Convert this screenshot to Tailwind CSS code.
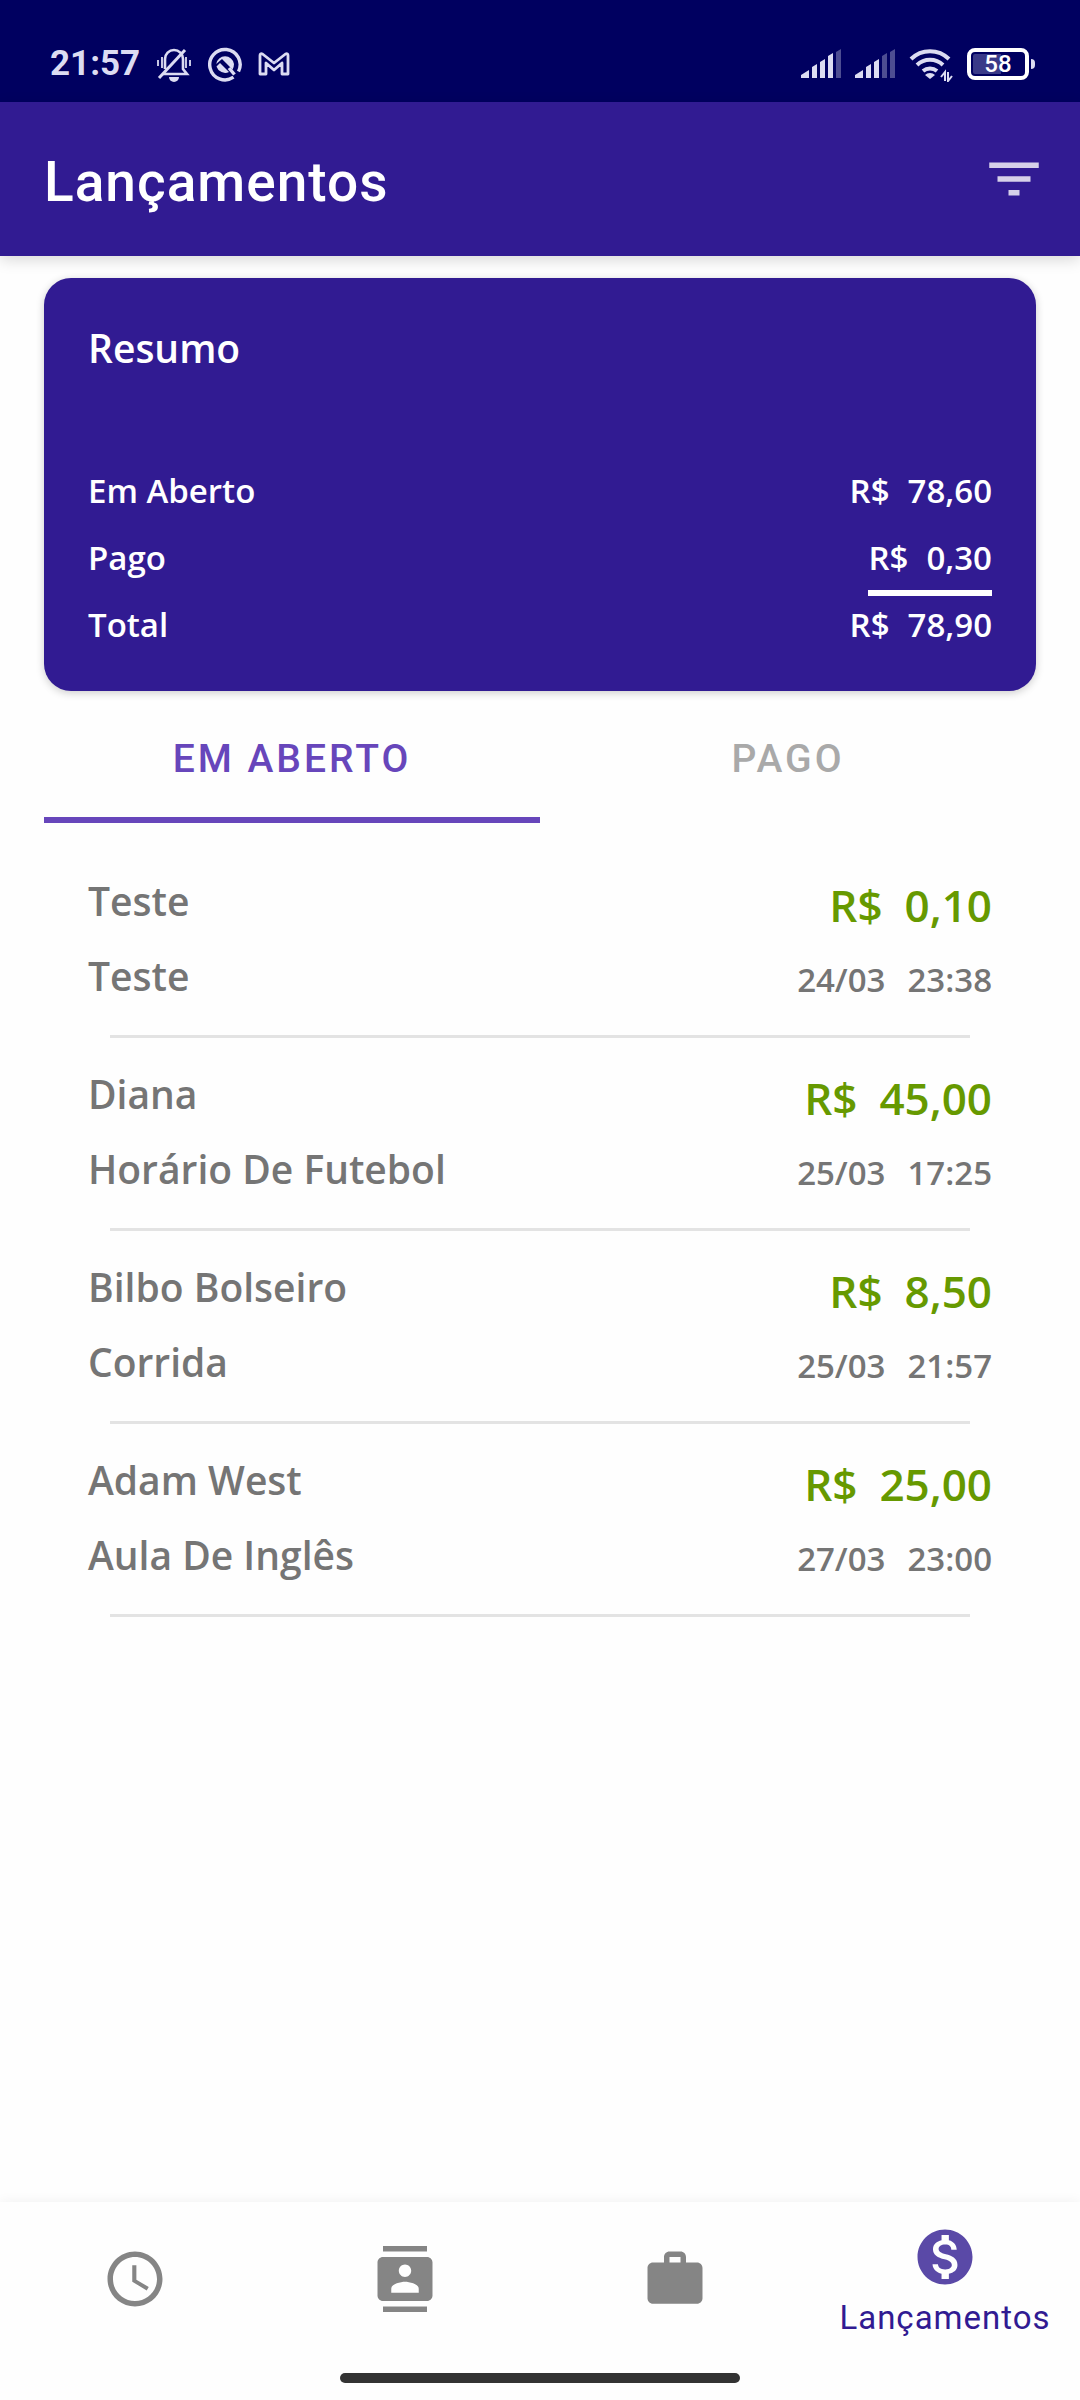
<!DOCTYPE html>
<html lang="pt-BR">
<head>
<meta charset="utf-8">
<meta name="viewport" content="width=device-width, initial-scale=1">
<title>Lançamentos</title>
<script src="https://cdn.jsdelivr.net/npm/@tailwindcss/browser@4"></script>
</head>
<body class="flex min-h-screen flex-col bg-[#fefefe] font-['Open_Sans',sans-serif] font-semibold text-[#757575]">

<!-- System status bar -->
<div class="flex h-[102px] items-center bg-[#000060] px-11 pt-[26px] font-['Roboto',sans-serif] text-[#dcdcf2]">
  <div class="flex flex-1 items-center gap-4 pl-1.5">
    <span class="text-[35px]/10 font-bold">21:57</span>
    <svg class="h-9 w-9" viewBox="0 0 36 36" fill="none" stroke="currentColor" stroke-width="2.6" aria-label="Silencioso">
      <path d="M7 28h24l-4-5V13a9 9 0 0 0-18 0v10"/><path d="M3 32 29 4" stroke-width="3"/>
      <path d="M6 11v11M2 14v6M30 11v11M34 14v6" stroke-width="1.8"/><path d="M13 31h10a5 5 0 0 1-10 0z" fill="currentColor" stroke="none"/>
    </svg>
    <svg class="h-9 w-[34px]" viewBox="0 0 34 36" fill="none" stroke="currentColor" aria-label="Aplicativo">
      <path d="M25.500 31.200A15.200 15.200 0 1 1 30.500 25.500" stroke-width="3.400"/>
      <path d="M8.200 18a9 9 0 0 1 17.800 0q0 3-1.500 5.500L14 13z" fill="currentColor" stroke="none"/>
      <path d="M8.500 20.500 12 17l9 9a9 9 0 0 1-12.500-5.500z" fill="currentColor" stroke="none"/>
      <path d="m21 22 5.500 6.500" stroke-width="3.400"/>
    </svg>
    <svg class="h-6 w-8" viewBox="0 0 32 24" fill="none" stroke="currentColor" stroke-width="2.8" stroke-linejoin="round" aria-label="Gmail">
      <path d="M2 22V3.500Q2 1 4.500 2L16 11 27.500 2Q30 1 30 3.500V22h-6V11l-8 7-8-7v11z"/>
    </svg>
  </div>
  <div class="flex items-center gap-3.5">
    <svg class="h-[30px] w-10" viewBox="0 0 40 30" fill="currentColor" aria-label="Sinal 1">
      <path d="M0 29v-3l8-5v8zM11 29V18l5-3v14zM19 29V13l5-3v19zM27 29V7l5-3v25z"/><path opacity=".35" d="M35 29V3l5-3v29z"/>
    </svg>
    <svg class="h-[30px] w-10" viewBox="0 0 40 30" fill="currentColor" aria-label="Sinal 2">
      <path d="M0 29v-3l8-5v8zM11 29V18l5-3v14zM19 29V13l5-3v19z"/><path opacity=".35" d="M27 29V7l5-3v25zM35 29V3l5-3v29z"/>
    </svg>
    <svg class="h-9 w-11" viewBox="0 0 44 36" fill="none" stroke="currentColor" stroke-width="4" aria-label="Wi-Fi">
      <path d="M2 13a27 27 0 0 1 38 0M8 19a19 19 0 0 1 26 0M14 25a11 11 0 0 1 14 0"/>
      <path d="m21 33-5-4a7 7 0 0 1 10 0z" fill="currentColor" stroke="none"/>
      <path d="M36 35v-9l-4 5M39 26v9l4-5" stroke-width="2"/>
    </svg>
    <div class="flex items-center gap-0.5 pr-px">
      <div class="flex h-8 w-[62px] items-center justify-center rounded-lg border-4 border-current bg-linear-to-r from-[#3a3a88] from-55% to-transparent to-55% bg-clip-content p-0.5 text-[24px]/6 font-medium text-white">58</div>
      <div class="h-2.5 w-1 rounded-r-sm bg-current"></div>
    </div>
  </div>
</div>

<!-- App bar -->
<header class="relative flex h-[154px] items-center justify-between bg-[#311b92] pr-[33px] pl-11 font-['Roboto',sans-serif] text-white shadow-[0_4px_14px_rgba(0,0,0,0.15)]">
  <h1 class="pt-1.5 text-[55px]/[64px] font-medium tracking-[1px]">Lançamentos</h1>
  <button type="button" aria-label="Filtrar" class="text-[#d6d1e9]">
    <svg class="h-[66px] w-[66px]" viewBox="0 0 24 24" fill="currentColor"><path d="M10 18h4v-2h-4v2zM3 6v2h18V6H3zm3 7h12v-2H6v2z"/></svg>
  </button>
</header>

<main class="flex-1 px-11 pt-[22px]">
  <!-- Totals -->
  <section class="rounded-[27px] bg-[#311b92] px-11 pt-11 pb-[22px] text-white shadow-[0_2px_8px_rgba(0,0,0,0.2)]">
    <h2 class="text-[39px]/[52px]">Resumo</h2>
    <dl class="mt-[94px] text-[33px]/[46px]">
      <div class="flex h-[67px] justify-between"><dt>Em Aberto</dt><dd class="flex gap-[18px]"><span>R$</span><span>78,60</span></dd></div>
      <div class="flex h-[67px] justify-between"><dt>Pago</dt><dd class="mb-1.5 flex gap-[18px] border-b-[6px] border-white"><span>R$</span><span>0,30</span></dd></div>
      <div class="flex h-[67px] justify-between"><dt>Total</dt><dd class="flex gap-[18px]"><span>R$</span><span>78,90</span></dd></div>
    </dl>
  </section>

  <div role="tablist" class="grid h-[132px] grid-cols-2 font-['Roboto',sans-serif] text-[39px]/[46px] font-medium tracking-[3px]">
    <button type="button" role="tab" aria-selected="true" class="border-b-[6px] border-[#6746bb] pt-2.5 text-[#6746bb]">EM ABERTO</button>
    <button type="button" role="tab" aria-selected="false" class="border-b-[6px] border-transparent pt-2.5 text-[#a9a9a9]">PAGO</button>
  </div>

  <!-- Open entries -->
  <ul class="pt-[22px]">
    <li class="px-11">
      <div class="flex h-[190px] justify-between pt-[30px]">
        <div class="flex flex-col gap-[23px] text-[39px]/[52px]"><span>Teste</span><span>Teste</span></div>
        <div class="flex flex-col items-end gap-[22px]">
          <span class="flex gap-[22px] text-[44px]/[60px] text-[#669900]"><span>R$</span><span>0,10</span></span>
          <span class="flex gap-[22px] text-[33px]/[46px]"><span>24/03</span><span>23:38</span></span>
        </div>
      </div>
      <hr class="mx-[22px] border-t-[3px] border-[#e3e3e3]">
    </li>
    <li class="px-11">
      <div class="flex h-[190px] justify-between pt-[30px]">
        <div class="flex flex-col gap-[23px] text-[39px]/[52px]"><span>Diana</span><span>Horário De Futebol</span></div>
        <div class="flex flex-col items-end gap-[22px]">
          <span class="flex gap-[22px] text-[44px]/[60px] text-[#669900]"><span>R$</span><span>45,00</span></span>
          <span class="flex gap-[22px] text-[33px]/[46px]"><span>25/03</span><span>17:25</span></span>
        </div>
      </div>
      <hr class="mx-[22px] border-t-[3px] border-[#e3e3e3]">
    </li>
    <li class="px-11">
      <div class="flex h-[190px] justify-between pt-[30px]">
        <div class="flex flex-col gap-[23px] text-[39px]/[52px]"><span>Bilbo Bolseiro</span><span>Corrida</span></div>
        <div class="flex flex-col items-end gap-[22px]">
          <span class="flex gap-[22px] text-[44px]/[60px] text-[#669900]"><span>R$</span><span>8,50</span></span>
          <span class="flex gap-[22px] text-[33px]/[46px]"><span>25/03</span><span>21:57</span></span>
        </div>
      </div>
      <hr class="mx-[22px] border-t-[3px] border-[#e3e3e3]">
    </li>
    <li class="px-11">
      <div class="flex h-[190px] justify-between pt-[30px]">
        <div class="flex flex-col gap-[23px] text-[39px]/[52px]"><span>Adam West</span><span>Aula De Inglês</span></div>
        <div class="flex flex-col items-end gap-[22px]">
          <span class="flex gap-[22px] text-[44px]/[60px] text-[#669900]"><span>R$</span><span>25,00</span></span>
          <span class="flex gap-[22px] text-[33px]/[46px]"><span>27/03</span><span>23:00</span></span>
        </div>
      </div>
      <hr class="mx-[22px] border-t-[3px] border-[#e3e3e3]">
    </li>
  </ul>
</main>

<footer class="bg-[#fefefe] pb-[17px] shadow-[0_0_12px_rgba(0,0,0,0.06)]">
  <nav class="grid h-[154px] grid-cols-4 font-['Roboto',sans-serif] text-[#858585]">
    <a href="#agenda" aria-label="Agenda" class="flex items-center justify-center">
      <svg class="h-[66px] w-[66px]" viewBox="0 0 24 24" fill="currentColor"><path d="M11.990 2C6.470 2 2 6.480 2 12s4.470 10 9.990 10C17.520 22 22 17.520 22 12S17.520 2 11.990 2zM12 20c-4.420 0-8-3.580-8-8s3.580-8 8-8 8 3.580 8 8-3.580 8-8 8zm.5-13H11v6l5.250 3.150.75-1.230-4.500-2.670z"/></svg>
    </a>
    <a href="#contatos" aria-label="Contatos" class="flex items-center justify-center">
      <svg class="h-[66px] w-[66px]" viewBox="0 0 24 24" fill="currentColor"><path d="M20 0H4v2h16V0zM4 24h16v-2H4v2zM20 4H4c-1.100 0-2 .9-2 2v12c0 1.100.9 2 2 2h16c1.100 0 2-.9 2-2V6c0-1.100-.9-2-2-2zm-8 2.750c1.240 0 2.250 1.010 2.250 2.250s-1.010 2.250-2.250 2.250S9.750 10.240 9.750 9 10.760 6.750 12 6.750zM17 17H7v-1.500c0-1.670 3.330-2.500 5-2.500s5 .83 5 2.500V17z"/></svg>
    </a>
    <a href="#servicos" aria-label="Serviços" class="flex items-center justify-center">
      <svg class="h-[66px] w-[66px]" viewBox="0 0 24 24" fill="currentColor"><path d="M20 6h-4V4c0-1.110-.89-2-2-2h-4c-1.110 0-2 .89-2 2v2H4c-1.110 0-2 .89-2 2v11c0 1.110.89 2 2 2h16c1.110 0 2-.89 2-2V8c0-1.110-.89-2-2-2zm-6 0h-4V4h4v2z"/></svg>
    </a>
    <a href="#lancamentos" aria-current="page" class="flex flex-col items-center pt-[22px] text-[#311b92]">
      <svg class="h-[66px] w-[66px] text-[#5a49a7]" viewBox="0 0 24 24" fill="currentColor"><path d="M12 2C6.480 2 2 6.480 2 12s4.480 10 10 10 10-4.480 10-10S17.520 2 12 2zm1.410 16.090V20h-2.670v-1.930c-1.710-.36-3.160-1.460-3.270-3.400h1.960c.1 1.050.82 1.870 2.650 1.870 1.960 0 2.400-.98 2.400-1.590 0-.83-.44-1.610-2.670-2.140-2.480-.6-4.180-1.620-4.180-3.670 0-1.720 1.390-2.840 3.110-3.210V4h2.670v1.950c1.860.45 2.790 1.860 2.850 3.390H14.300c-.05-1.110-.64-1.870-2.220-1.870-1.500 0-2.400.68-2.400 1.640 0 .84.65 1.390 2.670 1.910s4.180 1.390 4.180 3.910c-.01 1.830-1.380 2.830-3.120 3.160z"/></svg>
      <span class="pt-2 text-[33px]/[40px] font-normal tracking-[1px]">Lançamentos</span>
    </a>
  </nav>
  <div class="mx-auto mt-[17px] h-2.5 w-[37%] rounded-full bg-[#333333]"></div>
</footer>

</body>
</html>
